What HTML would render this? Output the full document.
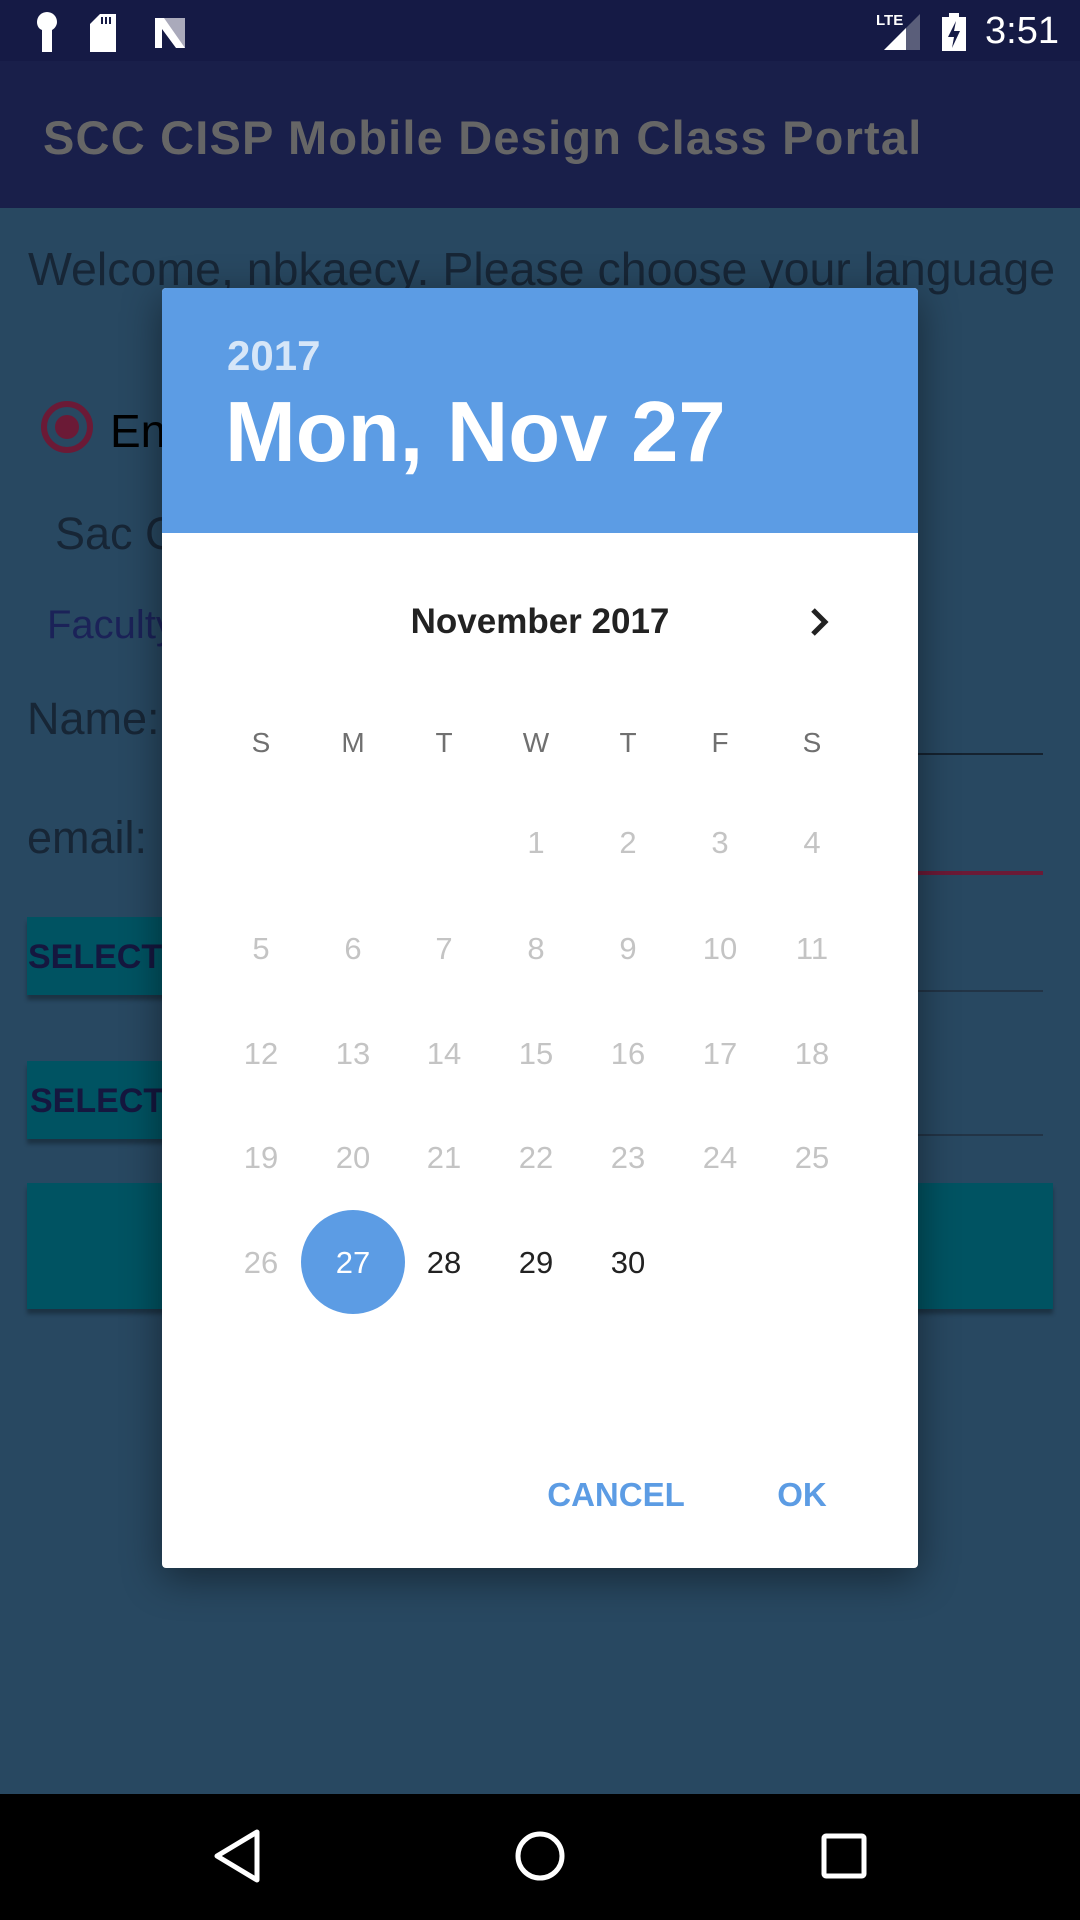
<!DOCTYPE html>
<html><head><meta charset="utf-8"><style>
*{margin:0;padding:0;box-sizing:border-box}
body{width:1080px;height:1920px;position:relative;overflow:hidden;background:#284861;font-family:"Liberation Sans",sans-serif}
.a{position:absolute;white-space:nowrap}
.c{transform:translate(-50%,-50%)}
.bg{color:#172636;font-size:45px}
.day{position:absolute;transform:translate(-50%,-50%);font-size:31px;color:#c4c4c4}
.wd{position:absolute;transform:translate(-50%,-50%);font-size:28px;color:#707070}
</style></head><body>
<div class="a" style="left:0;top:0;width:1080px;height:61px;background:#151a45"></div>
<div class="a" style="left:0;top:61px;width:1080px;height:147px;background:#191f4a"></div>
<div class="a" style="left:43px;top:110px;font-size:47px;color:#666;font-weight:bold;letter-spacing:1.2px">SCC CISP Mobile Design Class Portal</div>
<svg class="a" style="left:30px;top:10px" width="170" height="44">
<path d="M17 2a10 10 0 0 1 10 10c0 4-3 7-5 8v22h-10v-22c-3-1-5-4-5-8a10 10 0 0 1 10-10z" fill="#fff"/>
<path d="M70 4h16v38h-26v-28z" fill="#fff"/><rect x="71" y="7" width="2" height="7" fill="#151a45"/><rect x="75" y="7" width="2" height="7" fill="#151a45"/><rect x="79" y="7" width="2" height="7" fill="#151a45"/>
<path d="M125 8l30 30v-30" fill="#aab"/><path d="M125 8h9l21 30h-9l-14-19v19h-7z" fill="#fff"/>
</svg>
<div class="a" style="left:876px;top:12px;font-size:15px;color:#fff;font-weight:bold">LTE</div>
<svg class="a" style="left:884px;top:14px" width="40" height="40"><path d="M36 36V0L0 36z" fill="#5a5e7a"/><path d="M22 36V14L0 36z" fill="#fff"/></svg>
<svg class="a" style="left:942px;top:13px" width="26" height="38"><rect x="0" y="4" width="24" height="34" fill="#fff"/><rect x="7" y="0" width="10" height="5" fill="#fff"/><path d="M14 8l-8 16h6l-2 11 8-17h-6z" fill="#151a45"/></svg>
<div class="a" style="left:985px;top:10px;font-size:38px;color:#fff">3:51</div>
<div class="a bg" style="left:28px;top:242px;font-size:46.5px">Welcome, nbkaecy. Please choose your language</div>
<div class="a" style="left:41px;top:401px;width:52px;height:52px;border:6px solid #6b1a36;border-radius:50%"></div>
<div class="a" style="left:55px;top:415px;width:24px;height:24px;background:#6b1a36;border-radius:50%"></div>
<div class="a" style="left:110px;top:404px;font-size:46px;color:#000">En</div>
<div class="a bg" style="left:55px;top:508px">Sac C</div>
<div class="a" style="left:47px;top:603px;font-size:40px;color:#1b2258">Faculty</div>
<div class="a bg" style="left:27px;top:693px">Name:</div>
<div class="a bg" style="left:27px;top:812px">email:</div>
<div class="a" style="left:918px;top:753px;width:125px;height:2px;background:#15222f"></div>
<div class="a" style="left:918px;top:871px;width:125px;height:4px;background:#6b1a36"></div>
<div class="a" style="left:918px;top:990px;width:125px;height:2px;background:#223446"></div>
<div class="a" style="left:918px;top:1134px;width:125px;height:2px;background:#223446"></div>
<div class="a" style="left:27px;top:917px;width:150px;height:78px;background:#005362;box-shadow:0 5px 4px rgba(0,0,0,.3)"></div>
<div class="a" style="left:28px;top:938px;font-size:34px;font-weight:bold;color:#15173f">SELECT</div>
<div class="a" style="left:27px;top:1061px;width:150px;height:78px;background:#005362;box-shadow:0 5px 4px rgba(0,0,0,.3)"></div>
<div class="a" style="left:30px;top:1082px;font-size:34px;font-weight:bold;color:#15173f">SELECT</div>
<div class="a" style="left:27px;top:1183px;width:1026px;height:126px;background:#005362;box-shadow:0 5px 4px rgba(0,0,0,.3)"></div>
<div class="a" style="left:162px;top:288px;width:756px;height:1280px;background:#fff;border-radius:4px;box-shadow:0 10px 40px rgba(0,0,0,.45);overflow:hidden">
<div style="height:245px;background:#5c9ce4"></div>
</div>
<div class="a" style="left:227px;top:332px;font-size:42px;color:rgba(255,255,255,.75);font-weight:bold">2017</div>
<div class="a" style="left:225px;top:384px;font-size:85px;color:#fff;font-weight:bold">Mon, Nov 27</div>
<div class="a c" style="left:540px;top:622px;font-size:35px;font-weight:bold;color:#222">November 2017</div>
<svg class="a" style="left:805px;top:606px" width="30" height="32"><path d="M8 4l12 12-12 12" stroke="#222" stroke-width="5" fill="none"/></svg>
<div class="wd" style="left:261px;top:743px">S</div><div class="wd" style="left:353px;top:743px">M</div><div class="wd" style="left:444px;top:743px">T</div><div class="wd" style="left:536px;top:743px">W</div><div class="wd" style="left:628px;top:743px">T</div><div class="wd" style="left:720px;top:743px">F</div><div class="wd" style="left:812px;top:743px">S</div>
<div class="day" style="left:536px;top:843px">1</div><div class="day" style="left:628px;top:843px">2</div><div class="day" style="left:720px;top:843px">3</div><div class="day" style="left:812px;top:843px">4</div>
<div class="day" style="left:261px;top:949px">5</div><div class="day" style="left:353px;top:949px">6</div><div class="day" style="left:444px;top:949px">7</div><div class="day" style="left:536px;top:949px">8</div><div class="day" style="left:628px;top:949px">9</div><div class="day" style="left:720px;top:949px">10</div><div class="day" style="left:812px;top:949px">11</div>
<div class="day" style="left:261px;top:1054px">12</div><div class="day" style="left:353px;top:1054px">13</div><div class="day" style="left:444px;top:1054px">14</div><div class="day" style="left:536px;top:1054px">15</div><div class="day" style="left:628px;top:1054px">16</div><div class="day" style="left:720px;top:1054px">17</div><div class="day" style="left:812px;top:1054px">18</div>
<div class="day" style="left:261px;top:1158px">19</div><div class="day" style="left:353px;top:1158px">20</div><div class="day" style="left:444px;top:1158px">21</div><div class="day" style="left:536px;top:1158px">22</div><div class="day" style="left:628px;top:1158px">23</div><div class="day" style="left:720px;top:1158px">24</div><div class="day" style="left:812px;top:1158px">25</div>
<div class="a" style="left:301px;top:1210px;width:104px;height:104px;border-radius:50%;background:#5c9ce4"></div>
<div class="day" style="left:261px;top:1263px">26</div><div class="day" style="left:353px;top:1263px;color:#fff">27</div><div class="day" style="left:444px;top:1263px;color:#222">28</div><div class="day" style="left:536px;top:1263px;color:#222">29</div><div class="day" style="left:628px;top:1263px;color:#222">30</div>
<div class="a c" style="left:616px;top:1495px;font-size:33px;font-weight:bold;color:#5c9ce4">CANCEL</div>
<div class="a c" style="left:802px;top:1495px;font-size:33px;font-weight:bold;color:#5c9ce4">OK</div>
<div class="a" style="left:0;top:1794px;width:1080px;height:126px;background:#000"></div>
<svg class="a" style="left:0;top:1794px" width="1080" height="126">
<path d="M257 38v48l-40-24z" stroke="#fff" stroke-width="5" fill="none" stroke-linejoin="round"/>
<circle cx="540" cy="62" r="22" stroke="#fff" stroke-width="5" fill="none"/>
<rect x="824" y="42" width="40" height="40" rx="2" stroke="#fff" stroke-width="5" fill="none"/>
</svg>
</body></html>
